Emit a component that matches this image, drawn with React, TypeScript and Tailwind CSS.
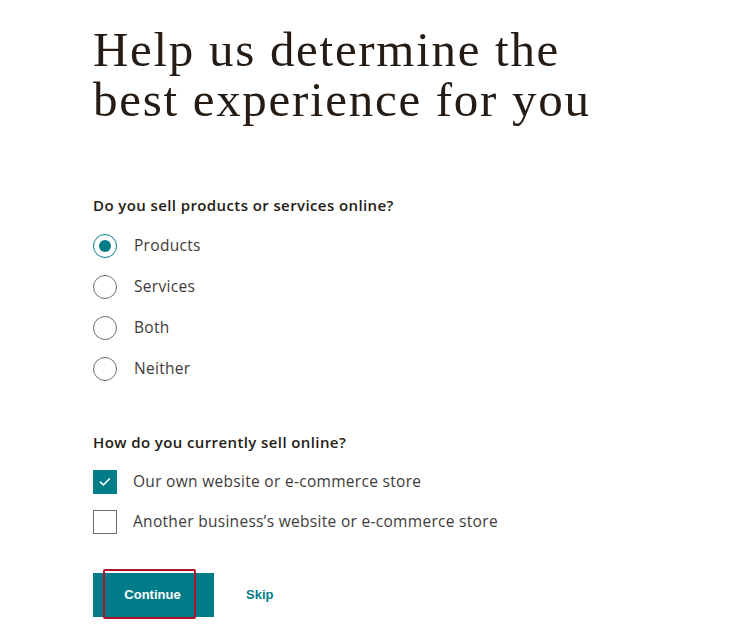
import React, { useState } from "react";

const sellOptions = ["Products", "Services", "Both", "Neither"];
const channels = [
  "Our own website or e-commerce store",
  "Another business\u2019s website or e-commerce store",
];

export default function App() {
  const [sell, setSell] = useState("Products");
  const [picked, setPicked] = useState<string[]>([channels[0]]);

  const toggle = (c: string) =>
    setPicked((p) => (p.includes(c) ? p.filter((x) => x !== c) : [...p, c]));

  return (
    <div
      className="min-h-[643px] w-[740px] bg-white text-[#241c15]"
      style={{ fontFamily: "'Open Sans', 'Liberation Sans', sans-serif" }}
    >
      <div className="pl-[93px] pt-[25px]">
        {/* Heading */}
        <h1
          className="text-[49px] leading-[50px] tracking-[1.7px] text-[#241c15]"
          style={{ fontFamily: "'Liberation Serif', 'DejaVu Serif', serif" }}
        >
          <span className="block">Help us determine the</span>
          <span className="block">best experience for you</span>
        </h1>

        {/* Question 1 */}
        <p className="mt-[70px] text-[15px] font-semibold leading-5 tracking-[0.4px]">
          Do you sell products or services online?
        </p>
        <div className="mt-[19px] flex flex-col gap-[17px]">
          {sellOptions.map((o) => (
            <label
              key={o}
              className="flex h-6 cursor-pointer items-center gap-[17px] text-[15.5px] tracking-[0.3px] text-[#403b3b]"
              onClick={() => setSell(o)}
            >
              <span
                className={`flex h-6 w-6 items-center justify-center rounded-full border ${
                  sell === o ? "border-[#007c89]" : "border-[#6e6e6e]"
                }`}
              >
                {sell === o && (
                  <span className="h-[12px] w-[12px] rounded-full bg-[#007c89]" />
                )}
              </span>
              {o}
            </label>
          ))}
        </div>

        {/* Question 2 */}
        <p className="mt-[51px] text-[15px] font-semibold leading-5 tracking-[0.4px]">
          How do you currently sell online?
        </p>
        <div className="mt-[18px] flex flex-col gap-[16px]">
          {channels.map((c) => {
            const on = picked.includes(c);
            return (
              <label
                key={c}
                className="flex h-6 cursor-pointer items-center gap-[16px] text-[15.5px] tracking-[0.3px] text-[#403b3b]"
                onClick={() => toggle(c)}
              >
                <span
                  className={`flex h-6 w-6 items-center justify-center border ${
                    on ? "border-[#007c89] bg-[#007c89]" : "border-[#6e6e6e] bg-white"
                  }`}
                >
                  {on && (
                    <svg width="12" height="10" viewBox="0 0 12 10" fill="none">
                      <path
                        d="M1.5 5.2 4.4 8 10.5 1.8"
                        stroke="white"
                        strokeWidth="1.6"
                        strokeLinecap="round"
                        strokeLinejoin="round"
                      />
                    </svg>
                  )}
                </span>
                {c}
              </label>
            );
          })}
        </div>

        {/* Actions */}
        <div className="mt-[39px] flex items-center gap-[32px]">
          <button
            className="relative h-[44px] w-[121px] bg-[#007c89] text-[13px] font-bold text-white"
            style={{ fontFamily: "'Liberation Sans', Arial, sans-serif" }}
          >
            <span className="pointer-events-none absolute -top-[4px] -bottom-[2px] left-[10px] right-[18px] rounded-[2px] border-2 border-[#b0112a]" />
            <span className="relative -ml-[2px]">Continue</span>
          </button>
          <button
            className="text-[13px] font-bold text-[#007c89]"
            style={{ fontFamily: "'Liberation Sans', Arial, sans-serif" }}
          >
            Skip
          </button>
        </div>
      </div>
    </div>
  );
}
